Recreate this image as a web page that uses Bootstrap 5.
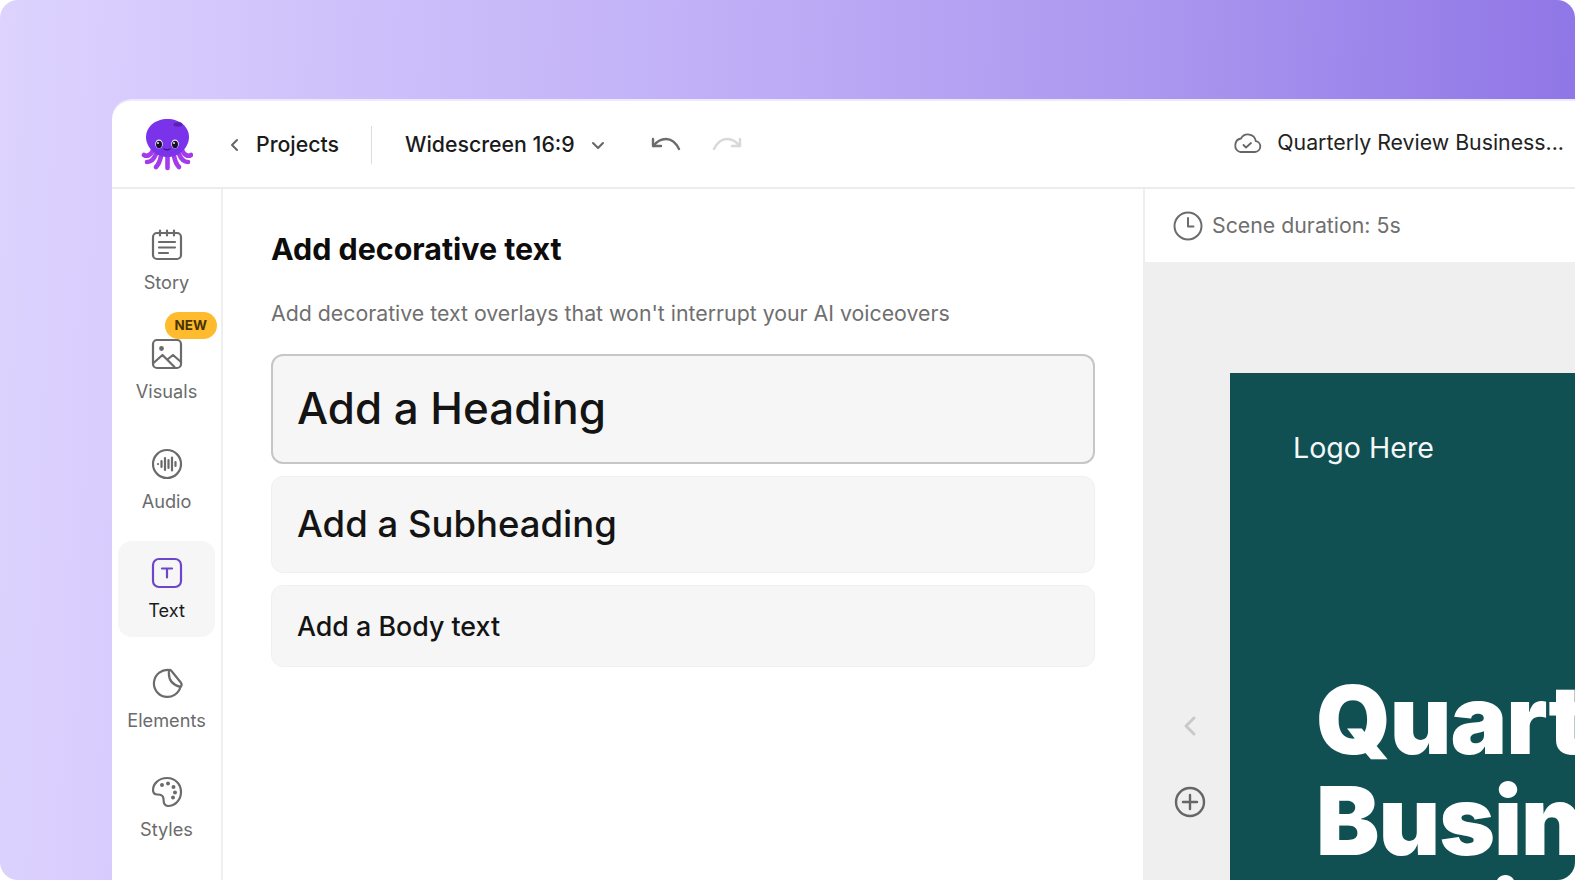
<!DOCTYPE html>
<html lang="en">
<head>
<meta charset="utf-8">
<title>Add decorative text</title>
<link rel="stylesheet" href="https://cdn.jsdelivr.net/npm/bootstrap@5.3.0/dist/css/bootstrap.min.css">
<style>
html,body{height:100%;margin:0;background:#fff}
body{font-family:Inter,"Liberation Sans",sans-serif;color:#111;overflow:hidden}
.stage{width:1575px;height:880px;padding:99px 0 0 112px;border-radius:18px;background:linear-gradient(92deg,#ddd3fe 0%,#cfc2fb 20%,#c0aff7 45%,#ab97ef 72%,#8e74e6 100%);overflow:hidden}
.appwin{height:781px;background:#fff;border-radius:20px 0 0 0;overflow:hidden;border-top:2px solid #efe9fd}
.topbar{height:88px;border-bottom:2px solid #ececec;padding-left:29px;padding-top:2px}
.logo-wrap{width:52px;height:53px;margin-bottom:2px}
.back-link{margin-left:37px;font-size:21.3px;font-weight:500;color:#1b1b1b}
.back-link svg{margin-right:17px}
.vsep{width:1px;height:38px;background:#dcdcdc;margin:0 33px 0 32px}
.format-pick{font-size:21.3px;font-weight:500;color:#1b1b1b}
.format-pick svg{margin-left:16px}
.undo-group{margin-left:46px;gap:31px}
.save-state{margin-left:auto;padding-right:11px;padding-bottom:4px;font-size:21.3px;color:#222;gap:15px}
.mainrow{height:691px}
.sidebar{width:111px;border-right:2px solid #efefef;padding:23.5px 6px 0}
.sideitem{width:97px;height:96px;margin-bottom:13.4px;font-size:18.2px;color:#6b6b6b;border-radius:14px;padding-top:16.5px;gap:8px}
.sideitem.is-active{background:#f6f6f6;color:#1c1c1c}
.new-tag{top:-10px;right:-2px;background:#fdbb2d;color:#4a3300;font-size:13.5px;font-weight:700;line-height:1;padding:7px 10px;border-radius:14px}
.sidepanel{width:922px;padding:41px 48px 0 48px;border-right:2px solid #eee}
.panel-title{font-size:30.4px;font-weight:700;color:#0c0c0c;line-height:38px;margin:0 0 30px}
.panel-sub{font-size:21.3px;color:#6f6f6f;line-height:30px;margin:0 0 26px}
.textopt{background:#f6f6f6;border:1px solid #f0f0f0;border-radius:12px;padding:0 25px;color:#141414;font-weight:500;margin-bottom:12px}
.opt-h{height:110px;font-size:43.9px;border:2px solid #c6c6c6;padding:0 24px 0}
.opt-s{height:97px;font-size:36.5px}
.opt-b{height:82px;font-size:26.8px}
.scene-col{min-width:0}
.scene-bar{height:73px;padding-left:28px;font-size:21.3px;color:#6f6f6f;gap:9px}
.canvas-area{background:#efefef;padding:111px 0 0 85px;min-height:0}
.slide{width:700px;height:560px;background:#104f52;color:#fff;overflow:hidden;padding:56px 0 0 63px}
.slide-logo{font-size:28.6px;line-height:37px;color:#f3f7f7}
.slide-head{margin:203px 0 0 23px;font-size:95px;line-height:101px;font-weight:900;letter-spacing:-1px;white-space:nowrap}
.slide-line{display:block}
.slide-line-last{margin-top:-7px}
.chev-ctl{left:38px;top:453px}
.plus-ctl{left:29px;top:524px}
</style>
</head>
<body>
<div class="stage">
 <div class="appwin d-flex flex-column">
  <header class="topbar d-flex align-items-center flex-shrink-0">
   <div class="logo-wrap">
    <svg width="52" height="53" viewBox="0 0 52 53" aria-hidden="true">
     <g fill="none" stroke="#a33bea" stroke-width="4.600" stroke-linecap="round">
      <path d="M12 32c-2 5-6 7-9 5"/><path d="M41 32c2 5 6 7 9 5"/>
      <path d="M15 36c-2 5-5 8-9 8"/><path d="M38 36c2 5 5 8 9 8"/>
      <path d="M20 38c-1 5-2 8-5 11"/><path d="M33 38c1 5 2 8 5 11"/>
      <path d="M26.500 38v12"/>
     </g>
     <path d="M26.500 1C39 1 48 9 48 19c0 10-9 20-21.500 20S5 29 5 19C5 9 14 1 26.500 1z" fill="#7a33ea"/>
     <ellipse cx="37" cy="6.500" rx="4.500" ry="2.200" fill="#5a22b4"/>
     <ellipse cx="18" cy="26" rx="3.800" ry="4.600" fill="#efe6ff"/><ellipse cx="34" cy="26" rx="3.800" ry="4.600" fill="#efe6ff"/>
     <ellipse cx="18" cy="26.500" rx="3" ry="3.700" fill="#17102a"/><ellipse cx="34" cy="26.500" rx="3" ry="3.700" fill="#17102a"/>
     <circle cx="17" cy="25" r=".9" fill="#fff"/><circle cx="33" cy="25" r=".9" fill="#fff"/>
     <path d="M23 31c2 1.200 4 1.200 6 0" fill="none" stroke="#3c1486" stroke-width="1.200" stroke-linecap="round"/>
    </svg>
   </div>
   <div class="back-link d-flex align-items-center">
    <svg width="9" height="14" viewBox="0 0 9 14" fill="none" stroke="#666" stroke-width="2" stroke-linecap="round" stroke-linejoin="round" aria-hidden="true"><path d="M7 2 2 7l5 5"/></svg>Projects
   </div>
   <div class="vsep"></div>
   <div class="format-pick d-flex align-items-center">Widescreen 16:9
    <svg width="14" height="9" viewBox="0 0 14 9" fill="none" stroke="#666" stroke-width="2" stroke-linecap="round" stroke-linejoin="round" aria-hidden="true"><path d="m2 2 5 5 5-5"/></svg>
   </div>
   <div class="undo-group d-flex align-items-center">
    <svg width="30" height="18" viewBox="0 0 30 18" fill="none" stroke="#6c6c6c" stroke-width="2.400" stroke-linecap="round" stroke-linejoin="round" aria-hidden="true"><path d="M2 3v7h8"/><path d="M2.500 10C6 5 10 3 15 3c6 0 10 4 13 10"/></svg>
    <svg width="30" height="18" viewBox="0 0 30 18" fill="none" stroke="#d8d8d8" stroke-width="2.400" stroke-linecap="round" stroke-linejoin="round" aria-hidden="true"><path d="M28 3v7h-8"/><path d="M27.500 10C24 5 20 3 15 3 9 3 5 7 2 13"/></svg>
   </div>
   <div class="save-state d-flex align-items-center">
    <svg width="30" height="24" viewBox="0 0 30 24" fill="none" stroke="#666" stroke-width="1.800" stroke-linecap="round" stroke-linejoin="round" aria-hidden="true"><path d="M8 21h15a5.500 5.500 0 0 0 .8-10.900A8 8 0 0 0 9 7.500 7 7 0 0 0 8 21z"/><path d="m11.500 14 2.500 2.500 5-4.500"/></svg>
    <span>Quarterly Review Business...</span>
   </div>
  </header>
  <div class="mainrow d-flex">
   <nav class="sidebar flex-shrink-0">
    <div class="sideitem d-flex flex-column align-items-center">
     <svg class="flex-shrink-0" width="32" height="32" viewBox="0 0 32 32" fill="none" stroke="#6b6b6b" stroke-width="2.200" stroke-linecap="round" aria-hidden="true"><rect x="2" y="4" width="28" height="26" rx="4"/><path d="M9 1.500v5M16 1.500v5M23 1.500v5M8 13h16M8 18.500h16M8 24h9"/></svg>
     <span>Story</span>
    </div>
    <div class="sideitem d-flex flex-column align-items-center position-relative">
     <span class="new-tag position-absolute">NEW</span>
     <svg class="flex-shrink-0" width="32" height="32" viewBox="0 0 32 32" fill="none" stroke="#6b6b6b" stroke-width="2.200" stroke-linecap="round" stroke-linejoin="round" aria-hidden="true"><rect x="2" y="2" width="28" height="28" rx="4"/><circle cx="10.500" cy="10.500" r="1.300" fill="#6b6b6b"/><path d="m2.500 25 9-8 12 12M17 21l5-4 8 7"/></svg>
     <span>Visuals</span>
    </div>
    <div class="sideitem d-flex flex-column align-items-center">
     <svg class="flex-shrink-0" width="32" height="32" viewBox="0 0 32 32" fill="none" stroke="#6b6b6b" stroke-width="2.200" stroke-linecap="round" aria-hidden="true"><circle cx="16" cy="16" r="14"/><path d="M7 16v.1M10.500 13v6M14 10v12M17.500 12v8M21 9.500v13M24.500 14v4"/></svg>
     <span>Audio</span>
    </div>
    <div class="sideitem is-active d-flex flex-column align-items-center">
     <svg class="flex-shrink-0" width="32" height="32" viewBox="0 0 32 32" fill="none" stroke="#6d45c9" stroke-width="2.200" stroke-linecap="round" aria-hidden="true"><rect x="2" y="2" width="28" height="28" rx="6"/><path d="M11 11.500h10M16 11.500v9"/></svg>
     <span>Text</span>
    </div>
    <div class="sideitem d-flex flex-column align-items-center">
     <svg class="flex-shrink-0" width="32" height="32" viewBox="0 0 32 32" fill="none" stroke="#6b6b6b" stroke-width="2.200" stroke-linecap="round" stroke-linejoin="round" aria-hidden="true"><path d="M18 3A13.500 13.500 0 1 0 29.500 19.800"/><path d="M18 3c-1 9 3 15 11.500 16.800 1.200-1 1.400-2.600.5-4L20.500 4C19.700 3.100 18.800 2.800 18 3z"/></svg>
     <span>Elements</span>
    </div>
    <div class="sideitem d-flex flex-column align-items-center">
     <svg class="flex-shrink-0" width="32" height="32" viewBox="0 0 32 32" fill="none" stroke="#6b6b6b" stroke-width="2.200" stroke-linecap="round" stroke-linejoin="round" aria-hidden="true"><path d="M16 2C8 2 2 7.500 2 14c0 3 2 4.500 4.500 4.500 4 0 6 1 6 4.500 0 2.500.5 7 4.500 7 7 0 13-6 13-14S24 2 16 2z"/><circle cx="11" cy="9" r=".9" fill="#6b6b6b"/><circle cx="17" cy="7.500" r=".9" fill="#6b6b6b"/><circle cx="22.500" cy="11" r=".9" fill="#6b6b6b"/><circle cx="24" cy="16.500" r=".9" fill="#6b6b6b"/><circle cx="22" cy="21.500" r=".9" fill="#6b6b6b"/></svg>
     <span>Styles</span>
    </div>
   </nav>
   <section class="sidepanel flex-shrink-0">
    <h1 class="panel-title">Add decorative text</h1>
    <p class="panel-sub">Add decorative text overlays that won't interrupt your AI voiceovers</p>
    <div class="textopt opt-h d-flex align-items-center">Add a Heading</div>
    <div class="textopt opt-s d-flex align-items-center">Add a Subheading</div>
    <div class="textopt opt-b d-flex align-items-center">Add a Body text</div>
   </section>
   <section class="scene-col flex-grow-1 d-flex flex-column">
    <div class="scene-bar d-flex align-items-center flex-shrink-0">
     <svg width="30" height="30" viewBox="0 0 30 30" fill="none" stroke="#6b6b6b" stroke-width="2" stroke-linecap="round" stroke-linejoin="round" aria-hidden="true"><circle cx="15" cy="15" r="13.500"/><path d="M15 7v8.500h5.500"/></svg>
     <span>Scene duration: 5s</span>
    </div>
    <div class="canvas-area flex-grow-1 d-flex position-relative">
     <svg class="position-absolute chev-ctl" width="14" height="22" viewBox="0 0 14 22" fill="none" stroke="#c9c9c9" stroke-width="3" stroke-linecap="round" stroke-linejoin="round" aria-hidden="true"><path d="M11 3 3 11l8 8"/></svg>
     <svg class="position-absolute plus-ctl" width="32" height="32" viewBox="0 0 32 32" fill="none" stroke="#666" stroke-width="2.400" stroke-linecap="round" aria-hidden="true"><circle cx="16" cy="16" r="14"/><path d="M16 9v14M9 16h14"/></svg>
     <div class="slide flex-shrink-0">
      <div class="slide-logo">Logo Here</div>
      <div class="slide-head"><span class="slide-line">Quarterly</span><span class="slide-line">Business</span><span class="slide-line slide-line-last">Review</span></div>
     </div>
    </div>
   </section>
  </div>
 </div>
</div>
<script src="https://cdn.jsdelivr.net/npm/bootstrap@5.3.0/dist/js/bootstrap.bundle.min.js"></script>
</body>
</html>
